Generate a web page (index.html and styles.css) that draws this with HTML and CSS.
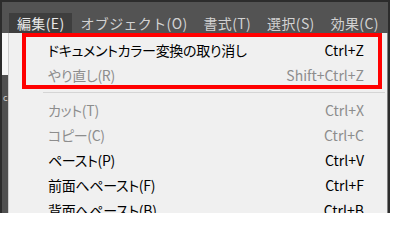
FILE: index.html
```html
<!DOCTYPE html>
<html lang="ja">
<head>
<meta charset="utf-8">
<title>編集メニュー</title>
<link rel="stylesheet" href="styles.css">
</head>
<body>
<div class="frame">
  <div class="menubar">
    <span class="mb-item active">編集(E)</span>
    <span class="mb-item">オブジェクト(O)</span>
    <span class="mb-item">書式(T)</span>
    <span class="mb-item">選択(S)</span>
    <span class="mb-item">効果(C)</span>
  </div>
  <div class="content">
    <div class="side">
      <div class="side-top"></div>
      <div class="side-bottom"><span class="side-char">c</span></div>
    </div>
    <div class="menu">
      <div class="item"><span class="label">ドキュメントカラー変換の取り消し</span><span class="key">Ctrl+Z</span></div>
      <div class="item disabled"><span class="label">やり直し(R)</span><span class="key">Shift+Ctrl+Z</span></div>
      <div class="sep"></div>
      <div class="item disabled"><span class="label">カット(T)</span><span class="key">Ctrl+X</span></div>
      <div class="item disabled"><span class="label">コピー(C)</span><span class="key">Ctrl+C</span></div>
      <div class="item"><span class="label">ペースト(P)</span><span class="key">Ctrl+V</span></div>
      <div class="item"><span class="label">前面へペースト(F)</span><span class="key">Ctrl+F</span></div>
      <div class="item"><span class="label">背面へペースト(B)</span><span class="key">Ctrl+B</span></div>
    </div>
  </div>
  <div class="callout"></div>
</div>
</body>
</html>
```
FILE: styles.css
```css
html, body {
  margin: 0;
  padding: 0;
  background: #ffffff;
}
body {
  width: 396px;
  height: 213px;
  overflow: hidden;
  font-family: "Noto Sans CJK JP", "Noto Sans", sans-serif;
}
.frame {
  position: relative;
  box-sizing: border-box;
  width: 390px;
  height: 213px;
  border: 2px solid #2c2c2c;
  border-bottom: none;
  background: #535353;
  display: flex;
  flex-direction: column;
  overflow: hidden;
}
.menubar {
  height: 31px;
  flex: none;
  display: flex;
  align-items: flex-end;
  padding-left: 7px;
  background: #535353;
}
.mb-item {
  height: 20px;
  line-height: 20px;
  padding: 0 8px;
  font-size: 14px;
  letter-spacing: 0.35px;
  color: #d2d2d2;
  white-space: nowrap;
}
.mb-item.active {
  background: #3e3e3e;
  color: #e8e8e8;
}
.content {
  flex: 1;
  display: flex;
  min-height: 0;
}
.side {
  width: 6px;
  flex: none;
  display: flex;
  flex-direction: column;
}
.side-top {
  height: 42px;
  background: #f7f7f7;
}
.side-bottom {
  flex: 1;
  background: #505050;
  padding-top: 18px;
  overflow: hidden;
}
.side-char {
  display: block;
  font-size: 9px;
  line-height: 10px;
  color: #cfcfcf;
  padding-left: 1px;
}
.menu {
  flex: 1;
  background: #f0f0f0;
  border-left: 1px solid #cdcdcd;
  border-right: 1px solid #808080;
  padding-top: 4px;
  font-size: 14px;
  font-feature-settings: "palt";
}
.item {
  height: 25px;
  display: flex;
  align-items: center;
  justify-content: space-between;
  padding: 0 23px 0 39px;
  color: #000000;
  white-space: nowrap;
}
.item.disabled {
  color: #8d8d8d;
}
.label {
  letter-spacing: -0.3px;
}
.key {
  font-feature-settings: normal;
}
.sep {
  height: 10px;
  display: flex;
  align-items: center;
  margin: 0 2px 0 34px;
}
.sep::before {
  content: "";
  flex: 1;
  height: 1px;
  background: #d5d5d5;
}
.callout {
  position: absolute;
  left: 20px;
  top: 31px;
  width: 360px;
  height: 56px;
  box-sizing: border-box;
  border: 4px solid #ff0000;
}
```
